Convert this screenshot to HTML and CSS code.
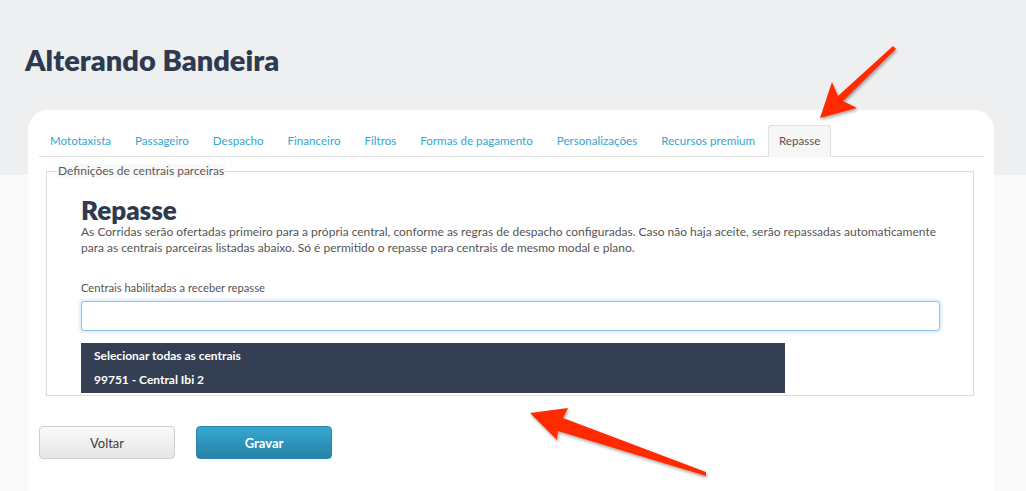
FILE: index.html
```html
<!DOCTYPE html>
<html lang="pt-BR">
<head>
    <meta charset="UTF-8">
    <meta name="viewport" content="width=device-width, initial-scale=1.0">
    <title>Alterando Bandeira</title>
    <link rel="stylesheet" href="styles.css">
</head>
<body>

    <div class="page-header">
        <h1>Alterando Bandeira</h1>
    </div>

    <div class="card">
        <ul class="tabs">
            <li><a href="#">Mototaxista</a></li>
            <li><a href="#">Passageiro</a></li>
            <li><a href="#">Despacho</a></li>
            <li><a href="#">Financeiro</a></li>
            <li><a href="#">Filtros</a></li>
            <li><a href="#">Formas de pagamento</a></li>
            <li><a href="#">Personalizações</a></li>
            <li><a href="#">Recursos premium</a></li>
            <li class="active"><a href="#">Repasse</a></li>
        </ul>

        <fieldset class="group">
            <legend>Definições de centrais parceiras</legend>

            <h2>Repasse</h2>
            <p class="help">As Corridas serão ofertadas primeiro para a própria central, conforme as regras de despacho configuradas. Caso não haja aceite, serão repassadas automaticamente para as centrais parceiras listadas abaixo. Só é permitido o repasse para centrais de mesmo modal e plano.</p>

            <label class="field-label" for="centrais">Centrais habilitadas a receber repasse</label>
            <input class="field-input" id="centrais" type="text">

            <div class="dropdown">
                <div class="dropdown-item">Selecionar todas as centrais</div>
                <div class="dropdown-item">99751 - Central Ibi 2</div>
            </div>
        </fieldset>

        <div class="actions">
            <button class="btn btn-default">Voltar</button>
            <button class="btn btn-primary">Gravar</button>
        </div>
    </div>

    <!-- setas vermelhas de anotação -->
    <svg class="annotations" width="1026" height="491" viewBox="0 0 1026 491">
        <defs>
            <filter id="shadow" x="-20%" y="-20%" width="140%" height="140%">
                <feDropShadow dx="1" dy="2" stdDeviation="1.5" flood-color="#000" flood-opacity="0.35"/>
            </filter>
        </defs>
        <polygon filter="url(#shadow)" fill="#ff2a00" points="820,118 832,82 838,96 893,46 896,49 843,101 857,108"/>
        <polygon filter="url(#shadow)" fill="#ff2a00" points="530,413 568,408 563,418 706,472 706,476 558,431 557,440"/>
    </svg>

</body>
</html>
```

FILE: styles.css
```css
* {
    margin: 0;
    padding: 0;
    box-sizing: border-box;
}

body {
    font-family: Lato, "Open Sans", sans-serif;
    background: linear-gradient(#eeeff1 175px, #fafafa 175px);
    min-height: 491px;
    position: relative;
    overflow: hidden;
}

/* Cabeçalho */
.page-header {
    padding: 42px 25px 0;
    height: 110px;
}

.page-header h1 {
    font-size: 29px;
    font-weight: 800;
    color: #2e3a4f;
    line-height: 36px;
}

/* Cartão principal */
.card {
    background: #fff;
    margin: 0 32px 0 28px;
    border-radius: 20px 20px 0 0;
    padding: 15px 10px 40px 11px;
    min-height: 400px;
}

/* Abas */
.tabs {
    list-style: none;
    display: flex;
    border-bottom: 1px solid #e3e3e3;
}

.tabs li {
    margin-right: 2px;
    margin-bottom: -1px;
}

.tabs a {
    display: block;
    font-size: 11.6px;
    line-height: 18px;
    padding: 6px 10px;
    color: #36a4d0;
    text-decoration: none;
    border: 1px solid transparent;
    border-radius: 3px 3px 0 0;
}

.tabs .active a {
    color: #555;
    background: #f7f7f7;
    border-color: #e0e0e0;
    border-bottom-color: #f7f7f7;
}

/* Grupo de campos */
.group {
    margin: 7px 10px 0 7px;
    border: 1px solid #dcdcdc;
    padding: 18px 33px 2px 34px;
}

.group legend {
    font-size: 12px;
    color: #5a5a5a;
    background: #f8f8f8;
    margin-left: -24px;
    padding: 0 1px;
    line-height: 14px;
}

.group h2 {
    font-size: 26px;
    font-weight: 800;
    color: #2e3a4f;
    line-height: 28px;
}

.help {
    font-size: 12px;
    line-height: 16px;
    color: #555;
}

.field-label {
    display: block;
    margin-top: 24px;
    font-size: 11.2px;
    line-height: 16px;
    color: #555;
}

.field-input {
    display: block;
    width: 100%;
    height: 30px;
    margin-top: 5px;
    border: 1px solid #8fc4ec;
    border-radius: 3px;
    box-shadow: 0 0 4px rgba(102, 175, 233, 0.55);
    outline: none;
}

.dropdown {
    width: 704px;
    margin-top: 12px;
    background: #343f53;
    padding: 1px 0;
}

.dropdown-item {
    font-size: 12px;
    font-weight: bold;
    color: #fff;
    line-height: 24px;
    padding: 0 13px;
}

/* Botões */
.actions {
    display: flex;
    gap: 21px;
    margin-top: 30px;
}

.btn {
    width: 136px;
    height: 33px;
    font-family: Lato, "Open Sans", sans-serif;
    font-size: 13px;
    border-radius: 4px;
    cursor: pointer;
}

.btn-default {
    color: #3d3d3d;
    background: linear-gradient(#fafafa, #e6e6e6);
    border: 1px solid #cfcfcf;
}

.btn-primary {
    color: #fff;
    font-weight: bold;
    background: linear-gradient(#36a7d1, #2882a6);
    border: 1px solid #2a86ab;
}

/* Setas de anotação */
.annotations {
    position: absolute;
    top: 0;
    left: 0;
    pointer-events: none;
}
```
